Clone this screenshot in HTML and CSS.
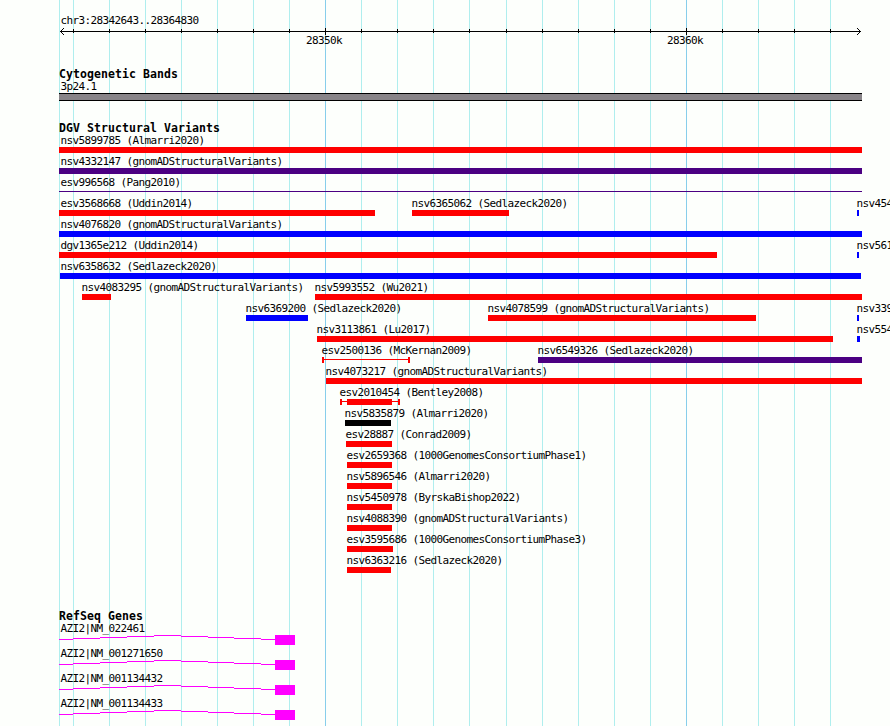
FILE: index.html
```html
<!DOCTYPE html>
<html lang="en">
<head>
    <meta charset="UTF-8">
    <meta name="viewport" content="width=device-width, initial-scale=1.0">
    <title>chr3:28342643..28364830</title>
    <link rel="stylesheet" href="styles.css">
</head>
<body>
    <!-- grid lines, every 1k and 10k -->
    <svg class="gridlines" width="890" height="726" shape-rendering="crispEdges">
        <path class="minor" d="M59.5 0V726M73.5 0V726M109.5 0V726M145.5 0V726M181.5 0V726M217.5 0V726M253.5 0V726M289.5 0V726M361.5 0V726M397.5 0V726M433.5 0V726M469.5 0V726M506.5 0V726M542.5 0V726M578.5 0V726M614.5 0V726M650.5 0V726M722.5 0V726M758.5 0V726M794.5 0V726M830.5 0V726"/>
        <path class="major" d="M325.5 0V726M686.5 0V726"/>
    </svg>

    <div class="browser">
        <div class="ruler">
            <div class="label">chr3:28342643..28364830</div>
            <svg class="scale" width="890" height="10" shape-rendering="crispEdges">
                <path d="M60 4.5H861M73.5 2V6M109.5 2V6M145.5 2V6M181.5 2V6M217.5 2V6M253.5 2V6M289.5 2V6M325.5 1V8M361.5 2V6M397.5 2V6M433.5 2V6M469.5 2V6M506.5 2V6M542.5 2V6M578.5 2V6M614.5 2V6M650.5 2V6M686.5 1V8M722.5 2V6M758.5 2V6M794.5 2V6M830.5 2V6"/>
                <path d="M61 3.5h1M62 2.5h1M63 1.5h1M61 5.5h1M62 6.5h1M63 7.5h1M859 3.5h1M858 2.5h1M857 1.5h1M859 5.5h1M858 6.5h1M857 7.5h1"/>
            </svg>
            <div class="row numbers">
                <span class="number" style="--x:306px">28350k</span>
                <span class="number" style="--x:667px">28360k</span>
            </div>
        </div>

        <div class="track cyto">
            <h2>Cytogenetic Bands</h2>
            <div class="label">3p24.1</div>
            <div class="band"></div>
        </div>

        <div class="track variants">
            <h2>DGV Structural Variants</h2>
            <div class="row"><div class="feature edge" style="--x:59px;--w:803px">nsv5899785 (Almarri2020)<i class="bar"></i></div></div>
            <div class="row"><div class="feature edge" style="--x:59px;--w:803px">nsv4332147 (gnomADStructuralVariants)<i class="bar indigo"></i></div></div>
            <div class="row"><div class="feature edge" style="--x:59px;--w:803px">esv996568 (Pang2010)<i class="bar thin"></i></div></div>
            <div class="row">
                <div class="feature edge" style="--x:59px;--w:316px">esv3568668 (Uddin2014)<i class="bar"></i></div>
                <div class="feature" style="--x:412px;--w:97px">nsv6365062 (Sedlazeck2020)<i class="bar"></i></div>
                <div class="feature" style="--x:857px;--w:2px">nsv454<i class="bar blue"></i></div>
            </div>
            <div class="row"><div class="feature edge" style="--x:59px;--w:803px">nsv4076820 (gnomADStructuralVariants)<i class="bar blue"></i></div></div>
            <div class="row">
                <div class="feature edge" style="--x:59px;--w:658px">dgv1365e212 (Uddin2014)<i class="bar"></i></div>
                <div class="feature" style="--x:857px;--w:2px">nsv561<i class="bar blue"></i></div>
            </div>
            <div class="row"><div class="feature flush" style="--x:60px;--w:801px">nsv6358632 (Sedlazeck2020)<i class="bar blue"></i></div></div>
            <div class="row">
                <div class="feature" style="--x:82px;--w:29px">nsv4083295 (gnomADStructuralVariants)<i class="bar"></i></div>
                <div class="feature" style="--x:315px;--w:547px">nsv5993552 (Wu2021)<i class="bar"></i></div>
            </div>
            <div class="row">
                <div class="feature" style="--x:246px;--w:62px">nsv6369200 (Sedlazeck2020)<i class="bar blue"></i></div>
                <div class="feature" style="--x:488px;--w:268px">nsv4078599 (gnomADStructuralVariants)<i class="bar"></i></div>
                <div class="feature" style="--x:857px;--w:2px">nsv339<i class="bar blue"></i></div>
            </div>
            <div class="row">
                <div class="feature" style="--x:317px;--w:516px">nsv3113861 (Lu2017)<i class="bar"></i></div>
                <div class="feature" style="--x:857px;--w:3px">nsv554<i class="bar blue"></i></div>
            </div>
            <div class="row">
                <div class="feature" style="--x:322px;--w:88px">esv2500136 (McKernan2009)<i class="bar range"></i></div>
                <div class="feature" style="--x:538px;--w:324px">nsv6549326 (Sedlazeck2020)<i class="bar indigo"></i></div>
            </div>
            <div class="row"><div class="feature" style="--x:326px;--w:536px">nsv4073217 (gnomADStructuralVariants)<i class="bar"></i></div></div>
            <div class="row"><div class="feature" style="--x:340px;--w:60px">esv2010454 (Bentley2008)<i class="bar range"><i class="core"></i></i></div></div>
            <div class="row"><div class="feature" style="--x:345px;--w:46px">nsv5835879 (Almarri2020)<i class="bar black"></i></div></div>
            <div class="row"><div class="feature" style="--x:346px;--w:46px">esv28887 (Conrad2009)<i class="bar"></i></div></div>
            <div class="row"><div class="feature" style="--x:347px;--w:45px">esv2659368 (1000GenomesConsortiumPhase1)<i class="bar"></i></div></div>
            <div class="row"><div class="feature" style="--x:347px;--w:45px">nsv5896546 (Almarri2020)<i class="bar"></i></div></div>
            <div class="row"><div class="feature" style="--x:347px;--w:45px">nsv5450978 (ByrskaBishop2022)<i class="bar"></i></div></div>
            <div class="row"><div class="feature" style="--x:347px;--w:45px">nsv4088390 (gnomADStructuralVariants)<i class="bar"></i></div></div>
            <div class="row"><div class="feature" style="--x:347px;--w:46px">esv3595686 (1000GenomesConsortiumPhase3)<i class="bar"></i></div></div>
            <div class="row"><div class="feature" style="--x:347px;--w:44px">nsv6363216 (Sedlazeck2020)<i class="bar"></i></div></div>
        </div>

        <div class="track genes">
            <h2>RefSeq Genes</h2>
            <div class="gene">
                <div class="label">AZI2|NM_022461</div>
                <svg width="236" height="10" shape-rendering="crispEdges">
                    <g id="transcript">
                        <path d="M0 4.5H14M14 3.5H41M41 2.5H68M68 1.5H95M95 .5H122M122 1.5H149M149 2.5H175M175 3.5H202M202 4.5H216"/>
                        <rect x="216" width="20" height="10"/>
                    </g>
                </svg>
            </div>
            <div class="gene">
                <div class="label">AZI2|NM_001271650</div>
                <svg width="236" height="10" shape-rendering="crispEdges"><use href="#transcript"/></svg>
            </div>
            <div class="gene">
                <div class="label">AZI2|NM_001134432</div>
                <svg width="236" height="10" shape-rendering="crispEdges"><use href="#transcript"/></svg>
            </div>
            <div class="gene">
                <div class="label">AZI2|NM_001134433</div>
                <svg width="236" height="10" shape-rendering="crispEdges"><use href="#transcript"/></svg>
            </div>
        </div>
    </div>
</body>
</html>
```
FILE: styles.css
```css
body {
    margin: 0;
    width: 890px;
    height: 726px;
    overflow: hidden;
    background-color: #fdfffc;
    color: #000;
    font-family: "DejaVu Sans Mono", monospace;
    font-size: 11px;
    line-height: 12px;
    letter-spacing: -0.622px;
    white-space: nowrap;
}

svg {
    display: block;
}

h2 {
    margin: 0 0 0 59px;
    height: 13px;
    font-size: 11.5px;
    line-height: 12px;
    font-weight: bold;
    letter-spacing: 0.077px;
}

.gridlines {
    position: absolute;
    top: 0;
    left: 0;
    z-index: -1;
}

.minor {
    stroke: #afeeee;
}

.major {
    stroke: #87ceeb;
}

.label {
    margin-left: 60px;
    height: 12px;
    text-indent: 0.4px;
}

/* ruler */
.ruler {
    padding-top: 15px;
    height: 53px;
}

.scale path {
    stroke: #000;
}

.numbers {
    margin-top: -2px;
}

/* features share one row and are pushed to their start */
.row {
    display: grid;
    height: 21px;
}

.feature,
.number {
    grid-area: 1 / 1;
    margin-left: var(--x);
}

.feature {
    text-indent: -0.6px;
}

.edge {
    text-indent: 1.4px;
}

.flush {
    text-indent: 0.4px;
}

.bar {
    display: block;
    box-sizing: border-box;
    width: var(--w);
    height: 6px;
    background-color: #f00;
}

.blue {
    background-color: #00f;
}

.indigo {
    background-color: #4b0082;
}

.black {
    background-color: #000;
}

.thin {
    height: 1px;
    margin-top: 2px;
    background-color: #4b0082;
}

.range {
    border: solid #f00;
    border-width: 0 2px;
    background: linear-gradient(#f00, #f00) 0 2px / 100% 1px no-repeat;
}

.core {
    display: block;
    width: 45px;
    height: 6px;
    margin-left: 5px;
    background-color: #f00;
}

/* tracks */
.cyto {
    height: 54px;
}

.band {
    box-sizing: border-box;
    width: 803px;
    height: 8px;
    margin-left: 59px;
    border: solid #000;
    border-width: 1px 0;
    background-color: #888488;
}

.variants {
    height: 488px;
}

.gene {
    height: 25px;
}

.gene svg {
    margin-left: 59px;
    fill: #f0f;
}

.gene path {
    stroke: #f0f;
}
```
